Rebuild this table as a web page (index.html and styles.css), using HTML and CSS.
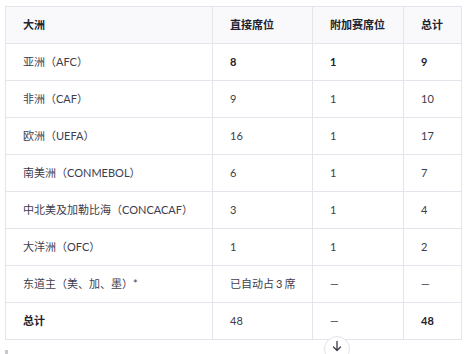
FILE: index.html
```html
<!DOCTYPE html>
<html lang="zh">
<head>
<meta charset="utf-8">
<link rel="stylesheet" href="styles.css">
</head>
<body>
<div class="wrap">
  <div class="scroller">
    <table class="tbl">
      <colgroup>
        <col class="c1"><col class="c2"><col class="c3"><col class="c4">
      </colgroup>
      <thead>
        <tr><th>大洲</th><th>直接席位</th><th>附加赛席位</th><th>总计</th></tr>
      </thead>
      <tbody>
        <tr><td>亚洲（AFC）</td><td class="b">8</td><td class="b">1</td><td class="b">9</td></tr>
        <tr><td>非洲（CAF）</td><td>9</td><td>1</td><td>10</td></tr>
        <tr><td>欧洲（UEFA）</td><td>16</td><td>1</td><td>17</td></tr>
        <tr><td>南美洲（CONMEBOL）</td><td>6</td><td>1</td><td>7</td></tr>
        <tr><td>中北美及加勒比海（CONCACAF）</td><td>3</td><td>1</td><td>4</td></tr>
        <tr><td>大洋洲（OFC）</td><td>1</td><td>1</td><td>2</td></tr>
        <tr><td>东道主（美、加、墨）*</td><td>已自动占<span class="num">3</span>席</td><td>—</td><td>—</td></tr>
        <tr><td class="b">总计</td><td>48</td><td>—</td><td class="b">48</td></tr>
      </tbody>
    </table>
  </div>
  <div class="thumb"></div>
  <button class="down" aria-label="向下滚动">
    <svg width="12" height="12" viewBox="0 0 12 12"><path d="M6 1.5V10.5M2.5 7L6 10.5L9.5 7" fill="none" stroke="#3a3a4a" stroke-width="1.3" stroke-linecap="round" stroke-linejoin="round"/></svg>
  </button>
</div>
</body>
</html>
```
FILE: styles.css
```css
html, body { margin: 0; padding: 0; background: #fff; }
body {
  font-family: Lato, "Noto Sans CJK SC", sans-serif;
  font-size: 11px;
  color: #3d3d4e;
}
.wrap { position: relative; width: 468px; height: 354px; padding: 6px 0 0 5px; box-sizing: border-box; overflow: hidden; }
.scroller { width: 456px; }
.tbl {
  border-collapse: collapse;
  width: 456px;
  table-layout: fixed;
}
.c1 { width: 207px; }
.c2 { width: 100px; }
.c3 { width: 91px; }
.c4 { width: 58px; }
.tbl th, .tbl td {
  border: 1px solid #e4e4ec;
  height: 36px;
  padding: 0 0 0 17px;
  text-align: left;
  vertical-align: middle;
  white-space: nowrap;
  line-height: 16px;
}
.tbl th {
  background: #f9f9fb;
  font-weight: 700;
  color: #22222e;
}
.tbl td.b { font-weight: 700; color: #22222e; }
.num { margin: 0 2px; }
.thumb {
  position: absolute;
  left: 5px; top: 350px;
  width: 3px; height: 4px;
  background: #c8c8d0;
}
.down {
  position: absolute;
  left: 324px; top: 336px;
  width: 26px; height: 26px;
  border-radius: 50%;
  border: 1px solid #e2e2ea;
  background: #fff;
  padding: 0;
  display: flex; align-items: center; justify-content: center;
}
.down svg { margin-top: -6px; }
```
